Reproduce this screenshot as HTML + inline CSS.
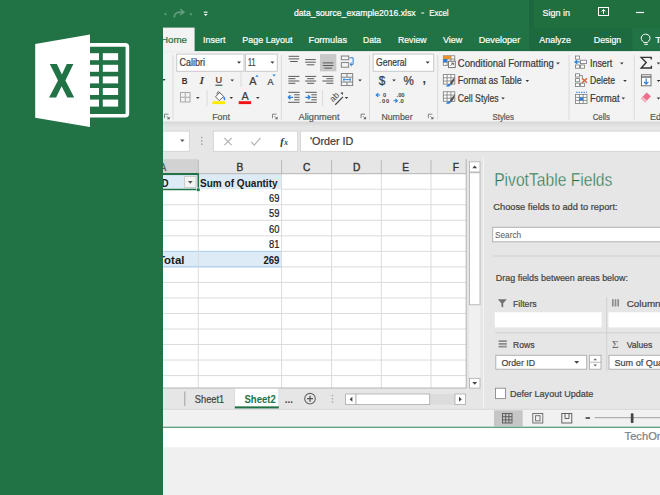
<!DOCTYPE html>
<html><head><meta charset="utf-8"><title>Excel 2016 PivotTable</title>
<style>
html,body{margin:0;padding:0;background:#f0f0f0;overflow:hidden}
body{width:660px;height:495px;font-family:"Liberation Sans",sans-serif}
svg{display:block;font-family:"Liberation Sans",sans-serif}
</style></head><body>
<svg width="660" height="495" viewBox="0 0 660 495">
<rect x="0" y="0" width="660" height="495" fill="#f0f0f0" />
<rect x="163" y="428" width="497" height="19.3" fill="#ffffff" />
<rect x="163" y="0" width="497" height="428" fill="#e6e6e6" />
<rect x="0" y="0" width="660" height="51.2" fill="#217346" />
<rect x="533.8" y="0" width="126.2" height="28" fill="#20703f" />
<rect x="529" y="0" width="4.8" height="28" fill="#1c673e" />
<rect x="529" y="27.9" width="103.4" height="23.3" fill="#1e6a40" />
<line x1="163" y1="50.9" x2="660" y2="50.9" stroke="#1d683f" stroke-width="0.8" />
<rect x="163" y="27.6" width="31.6" height="24" fill="#f3f3f3" />
<rect x="163" y="51.2" width="497" height="70.4" fill="#f3f3f3" />
<defs><linearGradient id="rs" x1="0" y1="0" x2="0" y2="1"><stop offset="0" stop-color="#d6d6d6"/><stop offset="1" stop-color="#e6e6e6"/></linearGradient></defs>
<rect x="163" y="121.6" width="497" height="5.4" fill="url(#rs)" />
<text x="294" y="15.87" font-size="9.96" fill="#ffffff" stroke="#ffffff" stroke-width="0.22" textLength="121.6" lengthAdjust="spacingAndGlyphs">data_source_example2016.xlsx</text>
<line x1="421.2" y1="13" x2="424.2" y2="13" stroke="#ffffff" stroke-width="1" />
<text x="429.2" y="15.87" font-size="9.96" fill="#ffffff" stroke="#ffffff" stroke-width="0.22" textLength="19.4" lengthAdjust="spacingAndGlyphs">Excel</text>
<text x="542.4" y="15.87" font-size="9.96" fill="#ffffff" stroke="#ffffff" stroke-width="0.22" textLength="27.6" lengthAdjust="spacingAndGlyphs">Sign in</text>
<g stroke="#fff" fill="none" stroke-width="1"><rect x="598.5" y="7.5" width="10" height="8"/><path d="M603.5 14v-4.5m-2 2l2-2l2 2" /></g>
<line x1="636" y1="12.5" x2="644" y2="12.5" stroke="#fff" stroke-width="1.2" />
<g opacity="0.3" stroke="#fff" fill="none" stroke-width="1.6"><path d="M174.5 17.5c-1-4 3-6 8.5-5.2"/><path d="M180.5 9l3.5 3.3l-4 2.6" stroke-width="1.4"/></g>
<path d="M164.0 13.6h3l-1.5 1.8z" fill="#6fa98a"/>
<path d="M189.5 13.6h3l-1.5 1.8z" fill="#6fa98a"/>
<line x1="203.8" y1="12.2" x2="207.6" y2="12.2" stroke="#fff" stroke-width="1.1" />
<path d="M203.8 13.9h3.8l-1.9 2.2z" fill="#fff"/>
<text x="161" y="43.07" font-size="9.96" fill="#217346" stroke="#217346" stroke-width="0.22" textLength="26.0" lengthAdjust="spacingAndGlyphs">Home</text>
<text x="203" y="43.07" font-size="9.96" fill="#ffffff" stroke="#ffffff" stroke-width="0.22" textLength="22.4" lengthAdjust="spacingAndGlyphs">Insert</text>
<text x="242.2" y="43.07" font-size="9.96" fill="#ffffff" stroke="#ffffff" stroke-width="0.22" textLength="50.4" lengthAdjust="spacingAndGlyphs">Page Layout</text>
<text x="308.5" y="43.07" font-size="9.96" fill="#ffffff" stroke="#ffffff" stroke-width="0.22" textLength="38.5" lengthAdjust="spacingAndGlyphs">Formulas</text>
<text x="363" y="43.07" font-size="9.96" fill="#ffffff" stroke="#ffffff" stroke-width="0.22" textLength="18.0" lengthAdjust="spacingAndGlyphs">Data</text>
<text x="398" y="43.07" font-size="9.96" fill="#ffffff" stroke="#ffffff" stroke-width="0.22" textLength="28.5" lengthAdjust="spacingAndGlyphs">Review</text>
<text x="443" y="43.07" font-size="9.96" fill="#ffffff" stroke="#ffffff" stroke-width="0.22" textLength="19.4" lengthAdjust="spacingAndGlyphs">View</text>
<text x="478.7" y="43.07" font-size="9.96" fill="#ffffff" stroke="#ffffff" stroke-width="0.22" textLength="41.5" lengthAdjust="spacingAndGlyphs">Developer</text>
<text x="539.3" y="43.07" font-size="9.96" fill="#ffffff" stroke="#ffffff" stroke-width="0.22" textLength="31.7" lengthAdjust="spacingAndGlyphs">Analyze</text>
<text x="593.8" y="43.07" font-size="9.96" fill="#ffffff" stroke="#ffffff" stroke-width="0.22" textLength="27.4" lengthAdjust="spacingAndGlyphs">Design</text>
<g transform="translate(1 0)" stroke="#fff" fill="none" stroke-width="1"><path d="M643 42.5c-2.6-2-3.2-4-2.6-5.6c1.6-3.6 7-3.6 8.4 0c.6 1.6 0 3.600-2.600 5.600z"/><path d="M643.3 44.300h3.600"/></g>
<text x="655.2" y="43.07" font-size="9.96" fill="#ffffff" stroke="#ffffff" stroke-width="0.22">T</text>
<line x1="173" y1="55" x2="173" y2="119.5" stroke="#dadada" stroke-width="1" />
<line x1="281.4" y1="55" x2="281.4" y2="119.5" stroke="#dadada" stroke-width="1" />
<line x1="369.5" y1="55" x2="369.5" y2="119.5" stroke="#dadada" stroke-width="1" />
<line x1="437.7" y1="55" x2="437.7" y2="119.5" stroke="#dadada" stroke-width="1" />
<line x1="569" y1="55" x2="569" y2="119.5" stroke="#dadada" stroke-width="1" />
<line x1="634.2" y1="55" x2="634.2" y2="119.5" stroke="#dadada" stroke-width="1" />
<path d="M164.5 118.2v-4h4" fill="none" stroke="#777" stroke-width="0.9"/><path d="M169.6 119.3h-2.800l2.800-2.800z" fill="#666"/><path d="M166.5 116.2l2.500 2.500" stroke="#666" stroke-width="0.8"/>
<path d="M272.5 118.2v-4h4" fill="none" stroke="#777" stroke-width="0.9"/><path d="M277.6 119.3h-2.800l2.800-2.800z" fill="#666"/><path d="M274.5 116.2l2.500 2.500" stroke="#666" stroke-width="0.8"/>
<path d="M361.0 118.2v-4h4" fill="none" stroke="#777" stroke-width="0.9"/><path d="M366.1 119.3h-2.800l2.800-2.800z" fill="#666"/><path d="M363.0 116.2l2.500 2.500" stroke="#666" stroke-width="0.8"/>
<path d="M428.3 118.2v-4h4" fill="none" stroke="#777" stroke-width="0.9"/><path d="M433.40000000000003 119.3h-2.800l2.800-2.800z" fill="#666"/><path d="M430.3 116.2l2.500 2.500" stroke="#666" stroke-width="0.8"/>
<text x="212.2" y="119.82" font-size="9.54" fill="#5a5a5a" stroke="#5a5a5a" stroke-width="0.22" textLength="17.8" lengthAdjust="spacingAndGlyphs">Font</text>
<text x="298.6" y="119.82" font-size="9.54" fill="#5a5a5a" stroke="#5a5a5a" stroke-width="0.22" textLength="40.9" lengthAdjust="spacingAndGlyphs">Alignment</text>
<text x="381.4" y="119.82" font-size="9.54" fill="#5a5a5a" stroke="#5a5a5a" stroke-width="0.22" textLength="31.2" lengthAdjust="spacingAndGlyphs">Number</text>
<text x="492.4" y="119.82" font-size="9.54" fill="#5a5a5a" stroke="#5a5a5a" stroke-width="0.22" textLength="21.6" lengthAdjust="spacingAndGlyphs">Styles</text>
<text x="592.7" y="119.82" font-size="9.54" fill="#5a5a5a" stroke="#5a5a5a" stroke-width="0.22" textLength="17.3" lengthAdjust="spacingAndGlyphs">Cells</text>
<text x="650" y="119.82" font-size="9.54" fill="#5a5a5a" stroke="#5a5a5a" stroke-width="0.22" textLength="13.0" lengthAdjust="spacingAndGlyphs">Edi</text>
<path d="M162.2 79.0h3.5l-1.8 2z" fill="#3b3b3b"/>
<rect x="176.7" y="54.1" width="67.3" height="17.2" fill="#fff" stroke="#c8c8c8" stroke-width="1" />
<rect x="245.5" y="54.1" width="31.8" height="17.2" fill="#fff" stroke="#c8c8c8" stroke-width="1" />
<text x="179.5" y="66.34" font-size="10.18" fill="#3b3b3b" stroke="#3b3b3b" stroke-width="0.22" textLength="25.5" lengthAdjust="spacingAndGlyphs">Calibri</text>
<path d="M237.0 61.6h4l-2.0 2.2z" fill="#3b3b3b"/>
<text x="248" y="66.34" font-size="10.18" fill="#3b3b3b" stroke="#3b3b3b" stroke-width="0.22" textLength="7.3" lengthAdjust="spacingAndGlyphs">11</text>
<path d="M270.4 61.6h4l-2.0 2.2z" fill="#3b3b3b"/>
<text x="181.8" y="83.69" font-size="9.75" fill="#333" font-weight="bold" textLength="5.8" lengthAdjust="spacingAndGlyphs">B</text>
<text x="199.6" y="83.63" font-size="10.39" fill="#333" font-style="italic" font-family="Liberation Serif, serif" stroke="#333" stroke-width="0.22" textLength="4.4" lengthAdjust="spacingAndGlyphs">I</text>
<text x="215.6" y="83.29" font-size="9.75" fill="#333" stroke="#333" stroke-width="0.22" textLength="6.6" lengthAdjust="spacingAndGlyphs">U</text>
<line x1="215.4" y1="85.2" x2="222.4" y2="85.2" stroke="#333" stroke-width="1" />
<path d="M230.4 79.6h3.6l-1.8 2z" fill="#3b3b3b"/>
<line x1="241" y1="72.5" x2="241" y2="87" stroke="#dadada" stroke-width="1" />
<text x="249.2" y="84.67" font-size="10.81" fill="#3b3b3b" stroke="#3b3b3b" stroke-width="0.22" textLength="7.2" lengthAdjust="spacingAndGlyphs">A</text>
<path d="M255.3 76.800l1.700-2l1.700 2z" fill="#2a7fd6"/>
<text x="267.4" y="84.79" font-size="8.9" fill="#3b3b3b" stroke="#3b3b3b" stroke-width="0.22" textLength="6.0" lengthAdjust="spacingAndGlyphs">A</text>
<path d="M272.400 74.600h3.400l-1.700 2z" fill="#2a7fd6"/>
<g stroke="#a8a8a8" stroke-width="1" fill="none"><rect x="180.500" y="92.500" width="9.500" height="9.500"/><path d="M185.250 92.500v9.500M180.500 97.250h9.500"/></g>
<path d="M196.0 97.0h3.6l-1.8 2z" fill="#3b3b3b"/>
<line x1="207" y1="90" x2="207" y2="106" stroke="#dadada" stroke-width="1" />
<g fill="none" stroke="#555" stroke-width="0.9"><path d="M215.500 96.800l4-4.300l4.200 3.800l-4.400 4.300z" fill="#fff"/><path d="M217.200 94.300c-0.600-2.800 2.400-3.600 2.600-1"/></g><path d="M223.600 96c1.800 1.600 2 3.200 1.200 4.400c-1.400-.6-1.600-2.400-1.200-4.400z" fill="#2a7fd6"/>
<rect x="212.4" y="101.2" width="12.6" height="2.9" fill="#ffeb00" />
<path d="M229.5 97.0h3.6l-1.8 2z" fill="#3b3b3b"/>
<text x="241.6" y="100.24" font-size="10.18" fill="#3b3b3b" stroke="#3b3b3b" stroke-width="0.22" textLength="7.2" lengthAdjust="spacingAndGlyphs">A</text>
<rect x="238.7" y="101.2" width="12.4" height="2.9" fill="#f01414" />
<path d="M256.0 97.0h3.6l-1.8 2z" fill="#3b3b3b"/>
<rect x="320" y="54.1" width="16.3" height="17.2" fill="#c8c8c8" />
<line x1="288.6" y1="56.3" x2="299.20000000000005" y2="56.3" stroke="#5a5a5a" stroke-width="1" />
<line x1="288.6" y1="58.9" x2="299.20000000000005" y2="58.9" stroke="#5a5a5a" stroke-width="1" />
<line x1="290.1" y1="61.5" x2="297.70000000000005" y2="61.5" stroke="#5a5a5a" stroke-width="1" />
<line x1="305.2" y1="59.6" x2="315.8" y2="59.6" stroke="#5a5a5a" stroke-width="1" />
<line x1="305.2" y1="62.2" x2="315.8" y2="62.2" stroke="#5a5a5a" stroke-width="1" />
<line x1="306.7" y1="64.8" x2="314.3" y2="64.8" stroke="#5a5a5a" stroke-width="1" />
<line x1="322.8" y1="62.9" x2="333.40000000000003" y2="62.9" stroke="#5a5a5a" stroke-width="1" />
<line x1="322.8" y1="65.5" x2="333.40000000000003" y2="65.5" stroke="#5a5a5a" stroke-width="1" />
<line x1="324.3" y1="68.1" x2="331.90000000000003" y2="68.1" stroke="#5a5a5a" stroke-width="1" />
<line x1="288.4" y1="76.4" x2="299.4" y2="76.4" stroke="#5a5a5a" stroke-width="1" />
<line x1="288.4" y1="78.7" x2="295.4" y2="78.7" stroke="#5a5a5a" stroke-width="1" />
<line x1="288.4" y1="81.0" x2="299.4" y2="81.0" stroke="#5a5a5a" stroke-width="1" />
<line x1="288.4" y1="83.30000000000001" x2="295.4" y2="83.30000000000001" stroke="#5a5a5a" stroke-width="1" />
<line x1="305.2" y1="76.4" x2="316.2" y2="76.4" stroke="#5a5a5a" stroke-width="1" />
<line x1="307.2" y1="78.7" x2="314.2" y2="78.7" stroke="#5a5a5a" stroke-width="1" />
<line x1="305.2" y1="81.0" x2="316.2" y2="81.0" stroke="#5a5a5a" stroke-width="1" />
<line x1="307.2" y1="83.30000000000001" x2="314.2" y2="83.30000000000001" stroke="#5a5a5a" stroke-width="1" />
<line x1="322.4" y1="76.4" x2="333.4" y2="76.4" stroke="#5a5a5a" stroke-width="1" />
<line x1="326.4" y1="78.7" x2="333.4" y2="78.7" stroke="#5a5a5a" stroke-width="1" />
<line x1="322.4" y1="81.0" x2="333.4" y2="81.0" stroke="#5a5a5a" stroke-width="1" />
<line x1="326.4" y1="83.30000000000001" x2="333.4" y2="83.30000000000001" stroke="#5a5a5a" stroke-width="1" />
<g fill="none" stroke="#777" stroke-width="0.9"><rect x="341.300" y="56" width="7.400" height="3.800"/><rect x="341.300" y="62.600" width="7.400" height="4.600"/></g><path d="M349.500 57.800h3.600v6.600h-3m1.800-1.700l-1.900 1.700l1.900 1.700" fill="none" stroke="#2a7fd6" stroke-width="1"/>
<g fill="none" stroke="#777" stroke-width="0.9"><rect x="341.300" y="73.600" width="11.400" height="12"/><path d="M341.300 77.200h11.400M341.300 82h11.400M347 73.600v3.600M347 82v3.600"/></g><path d="M343.200 79.600h7.600m-6.200-1.500l-1.600 1.500l1.600 1.500m4.800-3l1.600 1.500l-1.600 1.500" fill="none" stroke="#2a7fd6" stroke-width="0.9"/>
<path d="M358.2 79.6h3.6l-1.8 2z" fill="#3b3b3b"/>
<line x1="288.2" y1="92.3" x2="299.59999999999997" y2="92.3" stroke="#5a5a5a" stroke-width="1" />
<line x1="294.2" y1="94.8" x2="299.59999999999997" y2="94.8" stroke="#5a5a5a" stroke-width="1" />
<line x1="294.2" y1="97.3" x2="299.59999999999997" y2="97.3" stroke="#5a5a5a" stroke-width="1" />
<line x1="294.2" y1="99.8" x2="299.59999999999997" y2="99.8" stroke="#5a5a5a" stroke-width="1" />
<line x1="288.2" y1="102.3" x2="299.59999999999997" y2="102.3" stroke="#5a5a5a" stroke-width="1" />
<path d="M293.0 97.3h-4.400m1.800-2l-2 2l2 2" fill="none" stroke="#2a7fd6" stroke-width="1.300"/>
<line x1="305.4" y1="92.3" x2="316.79999999999995" y2="92.3" stroke="#5a5a5a" stroke-width="1" />
<line x1="311.4" y1="94.8" x2="316.79999999999995" y2="94.8" stroke="#5a5a5a" stroke-width="1" />
<line x1="311.4" y1="97.3" x2="316.79999999999995" y2="97.3" stroke="#5a5a5a" stroke-width="1" />
<line x1="311.4" y1="99.8" x2="316.79999999999995" y2="99.8" stroke="#5a5a5a" stroke-width="1" />
<line x1="305.4" y1="102.3" x2="316.79999999999995" y2="102.3" stroke="#5a5a5a" stroke-width="1" />
<path d="M305.4 97.3h4.400m-1.800-2l2 2l-2 2" fill="none" stroke="#2a7fd6" stroke-width="1.300"/>
<line x1="322.6" y1="90" x2="322.6" y2="106" stroke="#dadada" stroke-width="1" />
<g transform="translate(336.500 97.500) rotate(-45)"><text x="-6" y="1" font-size="8.500" fill="#444">ab</text><path d="M-6 4.200h11" stroke="#444" stroke-width="1.200"/></g>
<path d="M343.200 92.200l-2.800 .6l2.200 2.200z" fill="#444"/>
<path d="M344.7 97.0h3.6l-1.8 2z" fill="#3b3b3b"/>
<rect x="373.2" y="54.1" width="60.5" height="17.2" fill="#fff" stroke="#c8c8c8" stroke-width="1" />
<text x="376" y="66.34" font-size="10.18" fill="#3b3b3b" stroke="#3b3b3b" stroke-width="0.22" textLength="30.5" lengthAdjust="spacingAndGlyphs">General</text>
<path d="M425.7 61.6h4l-2.0 2.2z" fill="#3b3b3b"/>
<text x="378.8" y="84.94" font-size="13.25" fill="#3b3b3b" stroke="#3b3b3b" stroke-width="0.22" textLength="6.6" lengthAdjust="spacingAndGlyphs">$</text>
<path d="M392.2 79.6h3.6l-1.8 2z" fill="#3b3b3b"/>
<text x="403.5" y="84.76" font-size="12.19" fill="#3b3b3b" stroke="#3b3b3b" stroke-width="0.22" textLength="10.3" lengthAdjust="spacingAndGlyphs">%</text>
<text x="422.6" y="82.75" font-size="12.72" fill="#3b3b3b" font-weight="bold">,</text>
<g font-size="5.800" fill="#444" font-weight="bold"><text x="383" y="97">0</text><text x="379.300" y="102.800" textLength="10">.00</text><text x="396.600" y="97" textLength="8">.00</text><text x="399" y="102.800">.0</text></g>
<path d="M376.200 95h4m-2-1.800l-2 1.800l2 1.800" fill="none" stroke="#2a7fd6" stroke-width="1.100"/><path d="M393.400 100.800h4m-2-1.800l2 1.800l-2 1.800" fill="none" stroke="#2a7fd6" stroke-width="1.100"/>
<g fill="none" stroke="#777" stroke-width="0.800"><rect x="443.3" y="55.8" width="11.500" height="9.500" fill="#fff"/><path d="M443.3 59.0h11.500M443.3 62.199999999999996h11.500M447.1 55.8v9.500M450.90000000000003 55.8v9.500"/></g>
<rect x="443.3" y="55.8" width="3.8" height="3.2" fill="#e8912d" />
<rect x="443.3" y="59" width="3.8" height="3.2" fill="#2a7fd6" />
<rect x="447.1" y="55.8" width="3.8" height="3.2" fill="#e8912d" />
<rect x="448.6" y="61.2" width="6.6" height="6.4" fill="#fff" stroke="#666" stroke-width="0.9" />
<path d="M450.500 65.800l2.800-2.800m-2.200 0h2.200v2.200" stroke="#444" stroke-width="0.800" fill="none"/>
<g fill="none" stroke="#777" stroke-width="0.800"><rect x="443.3" y="74.6" width="11.500" height="9.500" fill="#fff"/><path d="M443.3 77.8h11.500M443.3 81.0h11.500M447.1 74.6v9.500M450.90000000000003 74.6v9.500"/></g>
<path d="M454.800 77.200c-2.200 1.800-4 4.200-5 6.600l1.600 1c1.800-2 3-4.400 3.400-7.600z" fill="#555"/><path d="M449.600 84c-1.800 0-2.600 1.200-3.800 2.200c2.200 .8 4.600 .4 5.200-1.400z" fill="#2a7fd6"/>
<g fill="none" stroke="#777" stroke-width="0.800"><rect x="443.3" y="91.8" width="11.500" height="9.500" fill="#fff"/><path d="M443.3 95.0h11.500M443.3 98.2h11.500M447.1 91.8v9.500M450.90000000000003 91.8v9.500"/></g>
<path d="M454.800 94.400c-2.200 1.800-4 4.200-5 6.600l1.600 1c1.800-2 3-4.400 3.400-7.600z" fill="#555"/><path d="M449.600 101.200c-1.800 0-2.600 1.200-3.800 2.200c2.200 .8 4.600 .4 5.200-1.400z" fill="#2a7fd6"/>
<text x="457.8" y="66.64" font-size="10.18" fill="#3b3b3b" stroke="#3b3b3b" stroke-width="0.22" textLength="96.0" lengthAdjust="spacingAndGlyphs">Conditional Formatting</text>
<path d="M556.2 62.4h3.6l-1.8 2z" fill="#3b3b3b"/>
<text x="457.8" y="84.34" font-size="10.18" fill="#3b3b3b" stroke="#3b3b3b" stroke-width="0.22" textLength="64.0" lengthAdjust="spacingAndGlyphs">Format as Table</text>
<path d="M525.5 80.0h3.6l-1.8 2z" fill="#3b3b3b"/>
<text x="457.8" y="101.64" font-size="10.18" fill="#3b3b3b" stroke="#3b3b3b" stroke-width="0.22" textLength="40.9" lengthAdjust="spacingAndGlyphs">Cell Styles</text>
<path d="M501.2 97.4h3.6l-1.8 2z" fill="#3b3b3b"/>
<g fill="#fff" stroke="#777" stroke-width="0.800"><rect x="575.600" y="56" width="4" height="3.200"/><rect x="580.600" y="60.200" width="5.800" height="3.400"/><rect x="575.600" y="65" width="4" height="3.200"/><rect x="580.400" y="65" width="4" height="3.200"/></g><path d="M575 61.900h4.800m-2.600-1.800l-2.200 1.800l2.200 1.800" fill="none" stroke="#2a7fd6" stroke-width="1.200"/>
<g fill="#fff" stroke="#777" stroke-width="0.800"><rect x="575.600" y="73.800" width="4" height="3.200"/><rect x="575.600" y="78.600" width="4" height="3.200"/><rect x="575.600" y="83.200" width="4" height="3.200"/><rect x="580.400" y="83.200" width="4" height="3.200"/><path d="M579.600 75.400h2.800v3" fill="none"/></g><path d="M582 78.200l5 4.600m0-4.600l-5 4.600" stroke="#e05a28" stroke-width="1.300" fill="none"/>
<path d="M576 92.300h11" stroke="#2a7fd6" stroke-width="1" stroke-dasharray="1.500 1"/><g fill="#fff" stroke="#777" stroke-width="0.800"><rect x="575.600" y="94.400" width="11.400" height="9"/><path d="M575.600 97.400h11.400M575.600 100.400h11.400M579.400 94.400v9M583.200 94.400v9" fill="none"/></g><rect x="579.400" y="97.400" width="3.800" height="3" fill="#2a7fd6"/>
<text x="590" y="66.64" font-size="10.18" fill="#3b3b3b" stroke="#3b3b3b" stroke-width="0.22" textLength="22.2" lengthAdjust="spacingAndGlyphs">Insert</text>
<path d="M620.0 62.4h3.6l-1.8 2z" fill="#3b3b3b"/>
<text x="590" y="84.34" font-size="10.18" fill="#3b3b3b" stroke="#3b3b3b" stroke-width="0.22" textLength="25.0" lengthAdjust="spacingAndGlyphs">Delete</text>
<path d="M623.2 80.0h3.6l-1.8 2z" fill="#3b3b3b"/>
<text x="590" y="101.64" font-size="10.18" fill="#3b3b3b" stroke="#3b3b3b" stroke-width="0.22" textLength="29.5" lengthAdjust="spacingAndGlyphs">Format</text>
<path d="M621.5 97.4h3.6l-1.8 2z" fill="#3b3b3b"/>
<path d="M651.200 59.400v-2h-10l5 5.200l-5 5.400h10.200v-2.200" fill="none" stroke="#333" stroke-width="1.400"/>
<path d="M656.7 62.4h3.6l-1.8 2z" fill="#3b3b3b"/>
<rect x="641.400" y="74.800" width="9.600" height="11" fill="#fff" stroke="#666" stroke-width="0.900"/><path d="M641.400 77h9.600" stroke="#666" stroke-width="1.400"/><path d="M646.200 78.600v5.400m-2.200-2.200l2.200 2.300l2.200-2.300" fill="none" stroke="#2a7fd6" stroke-width="1.200"/>
<path d="M656.7 80.0h3.6l-1.8 2z" fill="#3b3b3b"/>
<path d="M641 98.600l5.600-6l4.400 3.600l-5.800 6.200z" fill="#ee6f8a"/><path d="M641 98.600l1.800-1.900l4.300 3.700l-1.900 2z" fill="#f7b6c4"/>
<path d="M656.7 97.4h3.6l-1.8 2z" fill="#3b3b3b"/>
<rect x="163" y="131.1" width="26.3" height="20.2" fill="#fff" stroke="#cfcfcf" stroke-width="0.8" />
<path d="M180.1 139.5h4.4l-2.2 2.6z" fill="#555"/>
<rect x="201.1" y="136.9" width="1.3" height="1.3" fill="#909090" />
<rect x="201.1" y="140.20000000000002" width="1.3" height="1.3" fill="#909090" />
<rect x="201.1" y="143.5" width="1.3" height="1.3" fill="#909090" />
<rect x="213.3" y="131.1" width="84.4" height="20.2" fill="#fff" stroke="#cfcfcf" stroke-width="0.8" />
<path d="M224.400 138l7.200 7.200m0-7.200l-7.200 7.200" stroke="#b4b4b4" stroke-width="1.200" fill="none"/>
<path d="M251.200 141.800l3 3.400l6.400-7.400" stroke="#b4b4b4" stroke-width="1.200" fill="none"/>
<text x="280.2" y="144.50" font-size="10.6" fill="#3a3a3a" font-weight="bold" font-style="italic" font-family="Liberation Serif, serif">f</text>
<text x="284.2" y="145.25" font-size="7.42" fill="#3a3a3a" font-weight="bold" font-style="italic" font-family="Liberation Serif, serif">x</text>
<rect x="300.7" y="131.1" width="360" height="20.2" fill="#fff" stroke="#cfcfcf" stroke-width="0.8" />
<text x="310" y="145.15" font-size="11.02" fill="#3b3b3b" stroke="#3b3b3b" stroke-width="0.22" textLength="43.3" lengthAdjust="spacingAndGlyphs">&#x27;Order ID</text>
<rect x="163" y="159.2" width="303.2" height="14.5" fill="#e6e6e6" />
<rect x="163" y="159.2" width="35.3" height="14.5" fill="#d2d2d2" />
<rect x="163" y="173.7" width="303.2" height="214.3" fill="#fff" />
<rect x="163" y="173.7" width="118.60000000000002" height="15.53" fill="#ddebf7" />
<rect x="163" y="251.34999999999997" width="118.60000000000002" height="15.53" fill="#ddebf7" />
<line x1="163" y1="266.88" x2="281.6" y2="266.88" stroke="#9bc2e6" stroke-width="1" />
<line x1="163" y1="251.34999999999997" x2="281.6" y2="251.34999999999997" stroke="#9bc2e6" stroke-width="0.8" />
<g stroke="#d6d6d6" stroke-width="1">
<line x1="281.6" y1="189.23" x2="466.2" y2="189.23" stroke="#dbdbdb" stroke-width="1" />
<line x1="163" y1="204.76" x2="466.2" y2="204.76" stroke="#dbdbdb" stroke-width="1" />
<line x1="163" y1="220.29" x2="466.2" y2="220.29" stroke="#dbdbdb" stroke-width="1" />
<line x1="163" y1="235.82" x2="466.2" y2="235.82" stroke="#dbdbdb" stroke-width="1" />
<line x1="281.6" y1="251.34999999999997" x2="466.2" y2="251.34999999999997" stroke="#dbdbdb" stroke-width="1" />
<line x1="281.6" y1="266.88" x2="466.2" y2="266.88" stroke="#dbdbdb" stroke-width="1" />
<line x1="163" y1="282.40999999999997" x2="466.2" y2="282.40999999999997" stroke="#dbdbdb" stroke-width="1" />
<line x1="163" y1="297.94" x2="466.2" y2="297.94" stroke="#dbdbdb" stroke-width="1" />
<line x1="163" y1="313.46999999999997" x2="466.2" y2="313.46999999999997" stroke="#dbdbdb" stroke-width="1" />
<line x1="163" y1="329.0" x2="466.2" y2="329.0" stroke="#dbdbdb" stroke-width="1" />
<line x1="163" y1="344.53" x2="466.2" y2="344.53" stroke="#dbdbdb" stroke-width="1" />
<line x1="163" y1="360.05999999999995" x2="466.2" y2="360.05999999999995" stroke="#dbdbdb" stroke-width="1" />
<line x1="163" y1="375.59" x2="466.2" y2="375.59" stroke="#dbdbdb" stroke-width="1" />
<line x1="198.3" y1="173.7" x2="198.3" y2="388" stroke="#dbdbdb" stroke-width="1" />
<line x1="281.6" y1="173.7" x2="281.6" y2="388" stroke="#dbdbdb" stroke-width="1" />
<line x1="331.6" y1="173.7" x2="331.6" y2="388" stroke="#dbdbdb" stroke-width="1" />
<line x1="381.3" y1="173.7" x2="381.3" y2="388" stroke="#dbdbdb" stroke-width="1" />
<line x1="431" y1="173.7" x2="431" y2="388" stroke="#dbdbdb" stroke-width="1" />
</g>
<line x1="198.3" y1="160.2" x2="198.3" y2="173.7" stroke="#b8b8b8" stroke-width="1" />
<line x1="281.6" y1="160.2" x2="281.6" y2="173.7" stroke="#b8b8b8" stroke-width="1" />
<line x1="331.6" y1="160.2" x2="331.6" y2="173.7" stroke="#b8b8b8" stroke-width="1" />
<line x1="381.3" y1="160.2" x2="381.3" y2="173.7" stroke="#b8b8b8" stroke-width="1" />
<line x1="431" y1="160.2" x2="431" y2="173.7" stroke="#b8b8b8" stroke-width="1" />
<line x1="163" y1="173.7" x2="466.2" y2="173.7" stroke="#b4b4b4" stroke-width="1" />
<line x1="163" y1="173.7" x2="198.3" y2="173.7" stroke="#217346" stroke-width="1.6" />
<text x="163" y="170.74" font-size="10.18" fill="#555" text-anchor="middle" stroke="#555" stroke-width="0.22">A</text>
<text x="240" y="170.74" font-size="10.18" fill="#333" text-anchor="middle" stroke="#333" stroke-width="0.35">B</text>
<text x="306.8" y="170.74" font-size="10.18" fill="#333" text-anchor="middle" stroke="#333" stroke-width="0.35">C</text>
<text x="356.6" y="170.74" font-size="10.18" fill="#333" text-anchor="middle" stroke="#333" stroke-width="0.35">D</text>
<text x="405.6" y="170.74" font-size="10.18" fill="#333" text-anchor="middle" stroke="#333" stroke-width="0.35">E</text>
<text x="455.8" y="170.74" font-size="10.18" fill="#333" text-anchor="middle" stroke="#333" stroke-width="0.35">F</text>
<text x="161.5" y="186.55" font-size="11.02" fill="#1a1a1a" font-weight="bold" textLength="7.1" lengthAdjust="spacingAndGlyphs">D</text>
<text x="200" y="186.55" font-size="11.02" fill="#1a1a1a" font-weight="bold" textLength="77.6" lengthAdjust="spacingAndGlyphs">Sum of Quantity</text>
<text x="269" y="201.84" font-size="11.02" fill="#1a1a1a" stroke="#1a1a1a" stroke-width="0.22" textLength="10.4" lengthAdjust="spacingAndGlyphs">69</text>
<text x="269" y="217.37" font-size="11.02" fill="#1a1a1a" stroke="#1a1a1a" stroke-width="0.22" textLength="10.4" lengthAdjust="spacingAndGlyphs">59</text>
<text x="269" y="232.90" font-size="11.02" fill="#1a1a1a" stroke="#1a1a1a" stroke-width="0.22" textLength="10.4" lengthAdjust="spacingAndGlyphs">60</text>
<text x="269" y="248.43" font-size="11.02" fill="#1a1a1a" stroke="#1a1a1a" stroke-width="0.22" textLength="10.4" lengthAdjust="spacingAndGlyphs">81</text>
<text x="158" y="263.96" font-size="11.02" fill="#1a1a1a" font-weight="bold" textLength="26.4" lengthAdjust="spacingAndGlyphs">Total</text>
<text x="263.4" y="263.96" font-size="11.02" fill="#1a1a1a" font-weight="bold" textLength="16.0" lengthAdjust="spacingAndGlyphs">269</text>
<rect x="184.6" y="176.4" width="11.4" height="11.2" fill="#f4f4f4" stroke="#c4c4c4" stroke-width="0.8" />
<path d="M188.0 181.1h4.6l-2.3 2.6z" fill="#555"/>
<rect x="162" y="174.3" width="36.3" height="15.2" fill="none" stroke="#217346" stroke-width="1.5" />
<rect x="196.6" y="188" width="3.4" height="3.4" fill="#217346" stroke="#fff" stroke-width="0.6" />
<line x1="466.2" y1="159.2" x2="466.2" y2="388" stroke="#b4b4b4" stroke-width="1" />
<line x1="163" y1="388" x2="466.7" y2="388" stroke="#b4b4b4" stroke-width="1" />
<rect x="469" y="161.5" width="11.2" height="226.5" fill="#f0f0f0" />
<rect x="469.4" y="161.8" width="10.6" height="10.2" fill="#fff" stroke="#ababab" stroke-width="0.8" />
<path d="M472.300 168.200h4.800l-2.400-2.800z" fill="#444"/>
<rect x="469.4" y="172.8" width="10.6" height="132" fill="#fff" stroke="#ababab" stroke-width="0.8" />
<rect x="469.4" y="378.3" width="10.6" height="9.8" fill="#fff" stroke="#ababab" stroke-width="0.8" />
<path d="M472.300 382h4.800l-2.400 2.800z" fill="#444"/>
<line x1="184.8" y1="391.5" x2="184.8" y2="406" stroke="#a0a0a0" stroke-width="1" />
<text x="194.8" y="403.04" font-size="10.18" fill="#444" stroke="#444" stroke-width="0.22" textLength="29.4" lengthAdjust="spacingAndGlyphs">Sheet1</text>
<rect x="234.8" y="388.5" width="44" height="18.5" fill="#fff" stroke="#cfcfcf" stroke-width="0.6" />
<rect x="234.8" y="406.4" width="44" height="2.1" fill="#217346" />
<text x="244.5" y="403.04" font-size="10.18" fill="#217346" font-weight="bold" textLength="31.3" lengthAdjust="spacingAndGlyphs">Sheet2</text>
<text x="284.8" y="403.04" font-size="10.18" fill="#444" font-weight="bold" textLength="8.2" lengthAdjust="spacingAndGlyphs">...</text>
<circle cx="310" cy="398.700" r="5.300" fill="none" stroke="#666" stroke-width="1.100"/><path d="M307 398.700h6M310 395.700v6" stroke="#555" stroke-width="1.300"/>
<rect x="331.8" y="394.9" width="1.3" height="1.3" fill="#a0a0a0" />
<rect x="331.8" y="398.09999999999997" width="1.3" height="1.3" fill="#a0a0a0" />
<rect x="331.8" y="401.29999999999995" width="1.3" height="1.3" fill="#a0a0a0" />
<rect x="356" y="394" width="99" height="10.6" fill="#dcdcdc" />
<rect x="345.6" y="394" width="10.4" height="10.6" fill="#fff" stroke="#ababab" stroke-width="0.8" />
<path d="M352.400 396.800v5l-2.800-2.500z" fill="#444"/>
<rect x="356" y="394" width="73.7" height="10.6" fill="#fff" stroke="#ababab" stroke-width="0.8" />
<rect x="455" y="394" width="10.6" height="10.6" fill="#fff" stroke="#ababab" stroke-width="0.8" />
<path d="M459 396.800v5l2.800-2.500z" fill="#444"/>
<line x1="483.5" y1="157" x2="483.5" y2="409" stroke="#f4f4f4" stroke-width="1" />
<text x="494.2" y="186.00" font-size="17.6" fill="#217346" stroke="#e6e6e6" stroke-width="0.38" textLength="118.2" lengthAdjust="spacingAndGlyphs">PivotTable Fields</text>
<text x="493.3" y="210.27" font-size="9.96" fill="#444" stroke="#444" stroke-width="0.22" textLength="124.3" lengthAdjust="spacingAndGlyphs">Choose fields to add to report:</text>
<rect x="492.7" y="227.3" width="170" height="14.5" fill="#fff" stroke="#ababab" stroke-width="0.9" />
<text x="495" y="238.09" font-size="9.75" fill="#606060" stroke="#606060" stroke-width="0.05" textLength="26.2" lengthAdjust="spacingAndGlyphs">Search</text>
<line x1="493" y1="256" x2="660" y2="256" stroke="#d0d0d0" stroke-width="1" />
<text x="495.8" y="281.47" font-size="9.96" fill="#444" stroke="#444" stroke-width="0.22" textLength="132.2" lengthAdjust="spacingAndGlyphs">Drag fields between areas below:</text>
<path d="M497.800 299.200h9l-3.600 4v4.400l-1.800-1.200v-3.200z" fill="#707070"/>
<text x="513" y="306.57" font-size="9.96" fill="#444" stroke="#444" stroke-width="0.22" textLength="23.7" lengthAdjust="spacingAndGlyphs">Filters</text>
<rect x="494.8" y="312.3" width="106.7" height="15.1" fill="#fff" />
<line x1="606.7" y1="297" x2="606.7" y2="371" stroke="#d0d0d0" stroke-width="1" />
<g stroke="#8c8c8c" stroke-width="1.700"><path d="M612.800 299.200v7.400M615.500 299.200v7.400M618.200 299.200v7.400"/></g>
<text x="626.7" y="306.57" font-size="9.96" fill="#444" stroke="#444" stroke-width="0.22" textLength="38.8" lengthAdjust="spacingAndGlyphs">Columns</text>
<rect x="608.5" y="312.3" width="60" height="15.1" fill="#fff" />
<line x1="495" y1="332.9" x2="660" y2="332.9" stroke="#d0d0d0" stroke-width="1" />
<g stroke="#8c8c8c" stroke-width="1.700"><path d="M498.600 341.200h8.200M498.600 343.900h8.200M498.600 346.600h8.200"/></g>
<text x="513" y="347.57" font-size="9.96" fill="#444" stroke="#444" stroke-width="0.22" textLength="21.5" lengthAdjust="spacingAndGlyphs">Rows</text>
<text x="612" y="347.67" font-size="11.13" fill="#6a6a6a" font-family="Liberation Serif, serif" stroke="#6a6a6a" stroke-width="0.05">Σ</text>
<text x="626.7" y="347.57" font-size="9.96" fill="#444" stroke="#444" stroke-width="0.22" textLength="25.7" lengthAdjust="spacingAndGlyphs">Values</text>
<rect x="495.8" y="355.3" width="90.9" height="13.9" fill="#fff" stroke="#ababab" stroke-width="0.9" />
<text x="501.5" y="365.97" font-size="9.96" fill="#444" stroke="#444" stroke-width="0.22" textLength="33.5" lengthAdjust="spacingAndGlyphs">Order ID</text>
<path d="M574.2 361.0h5l-2.5 2.8z" fill="#444"/>
<rect x="589.4" y="355.3" width="11.6" height="13.9" fill="#fff" stroke="#ababab" stroke-width="0.9" />
<line x1="589.4" y1="362.25" x2="601" y2="362.25" stroke="#ababab" stroke-width="0.8" />
<path d="M593.400 360.200h3.600l-1.800-2z" fill="#666"/><path d="M593.400 364.400h3.600l-1.800 2z" fill="#666"/>
<rect x="609" y="355.3" width="60" height="13.9" fill="#fff" stroke="#ababab" stroke-width="0.9" />
<text x="614.5" y="365.97" font-size="9.96" fill="#444" stroke="#444" stroke-width="0.22" textLength="48.5" lengthAdjust="spacingAndGlyphs">Sum of Qua</text>
<rect x="495.5" y="388.2" width="10" height="10.4" fill="#fff" stroke="#8a8a8a" stroke-width="0.9" />
<text x="510" y="397.07" font-size="9.96" fill="#444" stroke="#444" stroke-width="0.22" textLength="83.3" lengthAdjust="spacingAndGlyphs">Defer Layout Update</text>
<line x1="163" y1="409.3" x2="660" y2="409.3" stroke="#d4d4d4" stroke-width="1" />
<rect x="163" y="409.8" width="497" height="17" fill="#f1f1f1" />
<rect x="494" y="410.3" width="28.7" height="16.2" fill="#c6c6c6" />
<g fill="none" stroke="#555" stroke-width="0.900"><rect x="502.500" y="413.500" width="9.500" height="9.500"/><path d="M505.700 413.500v9.500M508.900 413.500v9.500M502.500 416.700h9.500M502.500 419.900h9.500"/></g>
<g fill="none" stroke="#666" stroke-width="0.900"><rect x="532.800" y="413.500" width="10" height="9.500"/><rect x="535.600" y="415.700" width="4.400" height="5.200"/></g>
<g fill="none" stroke="#555" stroke-width="0.900"><rect x="561.800" y="413.500" width="10" height="9.500"/><path d="M565 413.500v5h4v-5"/></g>
<line x1="585.6" y1="418" x2="590" y2="418" stroke="#333" stroke-width="1.5" />
<line x1="594.8" y1="417.7" x2="660" y2="417.7" stroke="#8a8a8a" stroke-width="0.8" />
<rect x="630.8" y="413.2" width="2.7" height="9.8" fill="#444" rx="0.8" />
<line x1="163" y1="427.3" x2="660" y2="427.3" stroke="#3a8a5f" stroke-width="1.1" />
<text x="624.6" y="440.22" font-size="11.24" fill="#808080" stroke="#808080" stroke-width="0.22" textLength="75.0" lengthAdjust="spacingAndGlyphs">TechOnTheNet</text>
<rect x="0" y="0" width="163" height="495" fill="#217346" />
<g id="logo">
<rect x="86" y="44.9" width="41.4" height="70.8" fill="none" stroke="#fff" stroke-width="3.6" rx="2.2" />
<rect x="90" y="53.2" width="9" height="7" fill="#fff" />
<rect x="102.8" y="53.2" width="15.3" height="7" fill="#fff" />
<rect x="90" y="64.8" width="9" height="7" fill="#fff" />
<rect x="102.8" y="64.8" width="15.3" height="7" fill="#fff" />
<rect x="90" y="76.4" width="9" height="7" fill="#fff" />
<rect x="102.8" y="76.4" width="15.3" height="7" fill="#fff" />
<rect x="90" y="88.0" width="9" height="7" fill="#fff" />
<rect x="102.8" y="88.0" width="15.3" height="7" fill="#fff" />
<rect x="90" y="99.6" width="9" height="7" fill="#fff" />
<rect x="102.8" y="99.6" width="15.3" height="7" fill="#fff" />
<path d="M35.2 43.9 L90 34.6 L90 126.9 L35.2 117.8 Z" fill="#fff" />
<path d="M49.8 64.1 H56.8 L61.9 74.6 L66.8 64.1 H73.4 L65.4 80.5 L74.2 97.4 H67.3 L61.6 86.3 L56.1 97.4 H49.1 L58 80.6 Z" fill="#217346" />
</g>
</svg>
</body></html>
